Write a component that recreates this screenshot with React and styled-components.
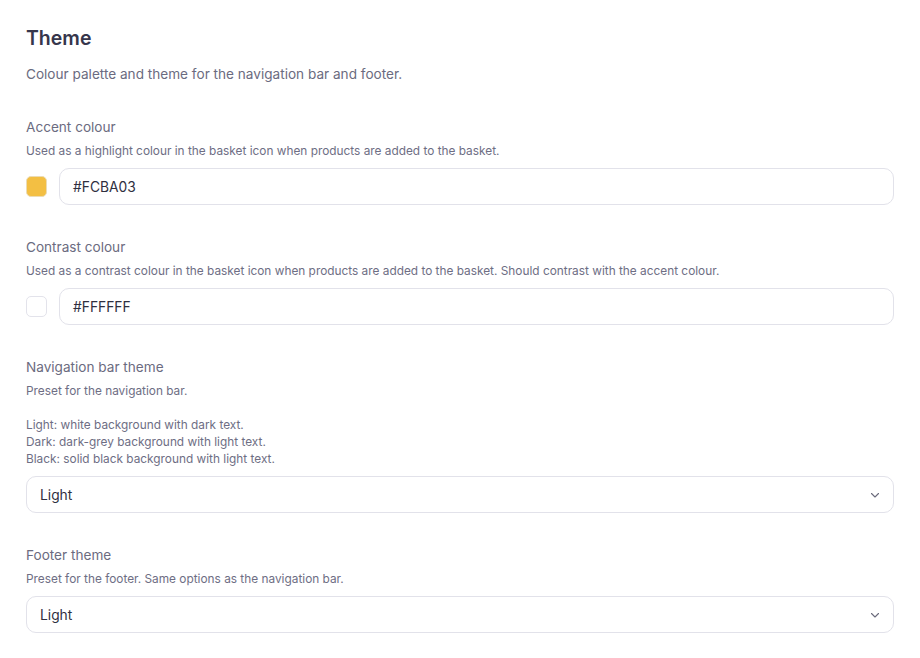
import React from "react";
import styled, { createGlobalStyle } from "styled-components";

const GlobalStyle = createGlobalStyle`
  body {
    margin: 0;
    background: #ffffff;
    font-family: Inter, "Noto Sans", sans-serif;
    -webkit-font-smoothing: antialiased;
  }
`;

const Page = styled.div`
  padding: 24px 26px;
`;

const Heading = styled.h2`
  margin: 0;
  font-size: 19.5px;
  line-height: 28px;
  font-weight: 600;
  color: #36364c;
`;

const Intro = styled.p`
  margin: 12px 0 33px;
  font-size: 13.6px;
  line-height: 20px;
  color: #6b6b80;
`;

const Field = styled.div`
  margin-bottom: 32px;
`;

const Label = styled.div`
  font-size: 13.6px;
  line-height: 20px;
  color: #6b6b80;
  margin-bottom: 6px;
`;

const Help = styled.div`
  font-size: 11.85px;
  line-height: 17px;
  color: #6e6e84;
  margin-bottom: 8px;
  white-space: pre-line;
`;

const ColorRow = styled.div`
  display: flex;
  align-items: center;
  gap: 12px;
`;

const Swatch = styled.div`
  width: 19px;
  height: 19px;
  border-radius: 5px;
  background: ${(p) => (p.$color === "#FCBA03" ? "#f3bf43" : p.$color)};
  border: 1px solid ${(p) => (p.$color === "#FFFFFF" ? "#e3e3eb" : "#ecdcb4")};
  flex-shrink: 0;
`;

const Box = styled.div`
  flex: 1;
  height: 35px;
  border: 1px solid #e2e2ea;
  border-radius: 10px;
  display: flex;
  align-items: center;
  justify-content: space-between;
  padding: 0 12px 0 13px;
  font-size: 13.8px;
  color: #2f2f3f;
`;

const Chevron = () => (
  <svg width="12" height="12" viewBox="0 0 24 24" fill="none" stroke="#6b6b7c" strokeWidth="2.2" strokeLinecap="round" strokeLinejoin="round">
    <path d="M5 9l7 7 7-7" />
  </svg>
);

const ColourField = ({ label, help, value }) => (
  <Field>
    <Label>{label}</Label>
    <Help>{help}</Help>
    <ColorRow>
      <Swatch $color={value} />
      <Box>{value}</Box>
    </ColorRow>
  </Field>
);

const SelectField = ({ label, help, value }) => (
  <Field>
    <Label>{label}</Label>
    <Help>{help}</Help>
    <Box>
      {value}
      <Chevron />
    </Box>
  </Field>
);

export default function App() {
  return (
    <>
      <GlobalStyle />
      <Page>
        <Heading>Theme</Heading>
        <Intro>Colour palette and theme for the navigation bar and footer.</Intro>
        <ColourField
          label="Accent colour"
          help="Used as a highlight colour in the basket icon when products are added to the basket."
          value="#FCBA03"
        />
        <ColourField
          label="Contrast colour"
          help="Used as a contrast colour in the basket icon when products are added to the basket. Should contrast with the accent colour."
          value="#FFFFFF"
        />
        <SelectField
          label="Navigation bar theme"
          help={"Preset for the navigation bar.\n\nLight: white background with dark text.\nDark: dark-grey background with light text.\nBlack: solid black background with light text."}
          value="Light"
        />
        <SelectField
          label="Footer theme"
          help="Preset for the footer. Same options as the navigation bar."
          value="Light"
        />
      </Page>
    </>
  );
}
